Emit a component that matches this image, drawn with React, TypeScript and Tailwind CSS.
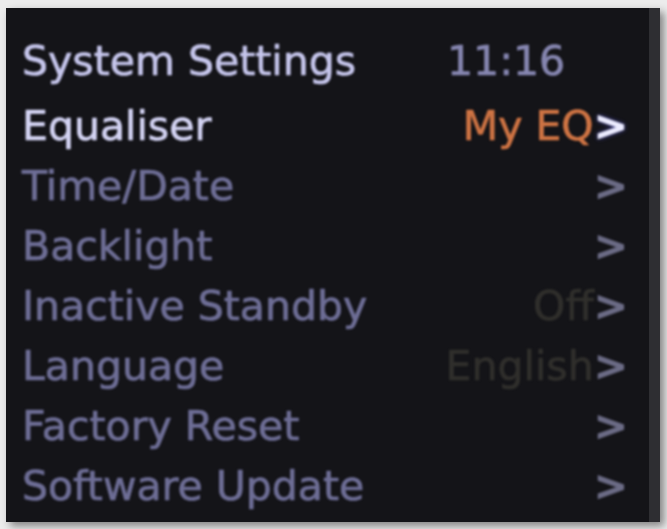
import React, { type FC } from 'react'

type Item = {
  label: string
  value?: string
  active?: boolean
}

const items: Item[] = [
  { label: 'Equaliser', value: 'My EQ', active: true },
  { label: 'Time/Date' },
  { label: 'Backlight' },
  { label: 'Inactive Standby', value: 'Off' },
  { label: 'Language', value: 'English' },
  { label: 'Factory Reset' },
  { label: 'Software Update' }
]

const Row: FC<{ item: Item }> = ({ item }) => (
  <div className="flex h-[60px] items-center justify-between">
    <span className={item.active ? 'text-[#d4d4f4]' : 'text-[#6e6e96]'}>{item.label}</span>
    <span className="flex items-center">
      {item.value && (
        <span className={item.active ? 'text-[#cf7444]' : 'text-[#302f2c]'}>{item.value}</span>
      )}
      <span className={item.active ? 'font-bold text-[#ececff] [text-shadow:0_0_4px_#5050c0]' : 'font-bold text-[#6c6c86]'}>&gt;</span>
    </span>
  </div>
)

const App: FC = () => {
  return (
    <div className="h-[529px] w-[667px] overflow-hidden bg-[#ececec] pl-[6px] pt-[8px]">
      <div className="h-[514px] w-[654px] border-r-[11px] border-[#2e2e32] bg-[#141418] shadow-[4px_4px_8px_rgba(0,0,0,0.45)]">
        <div className="pl-[16px] pr-[21px] pt-[23px] font-['DejaVu_Sans',sans-serif] text-[41px] leading-[60px] blur-[0.8px] [-webkit-text-stroke:0.7px_currentColor]">
          <div className="flex h-[65px] items-start">
            <span className="w-[425px] text-[#c6c6ec]">System Settings</span>
            <span className="text-[#8686b0]">11:16</span>
          </div>
          {items.map(item => (
            <Row key={item.label} item={item} />
          ))}
        </div>
      </div>
    </div>
  )
}

export default App
